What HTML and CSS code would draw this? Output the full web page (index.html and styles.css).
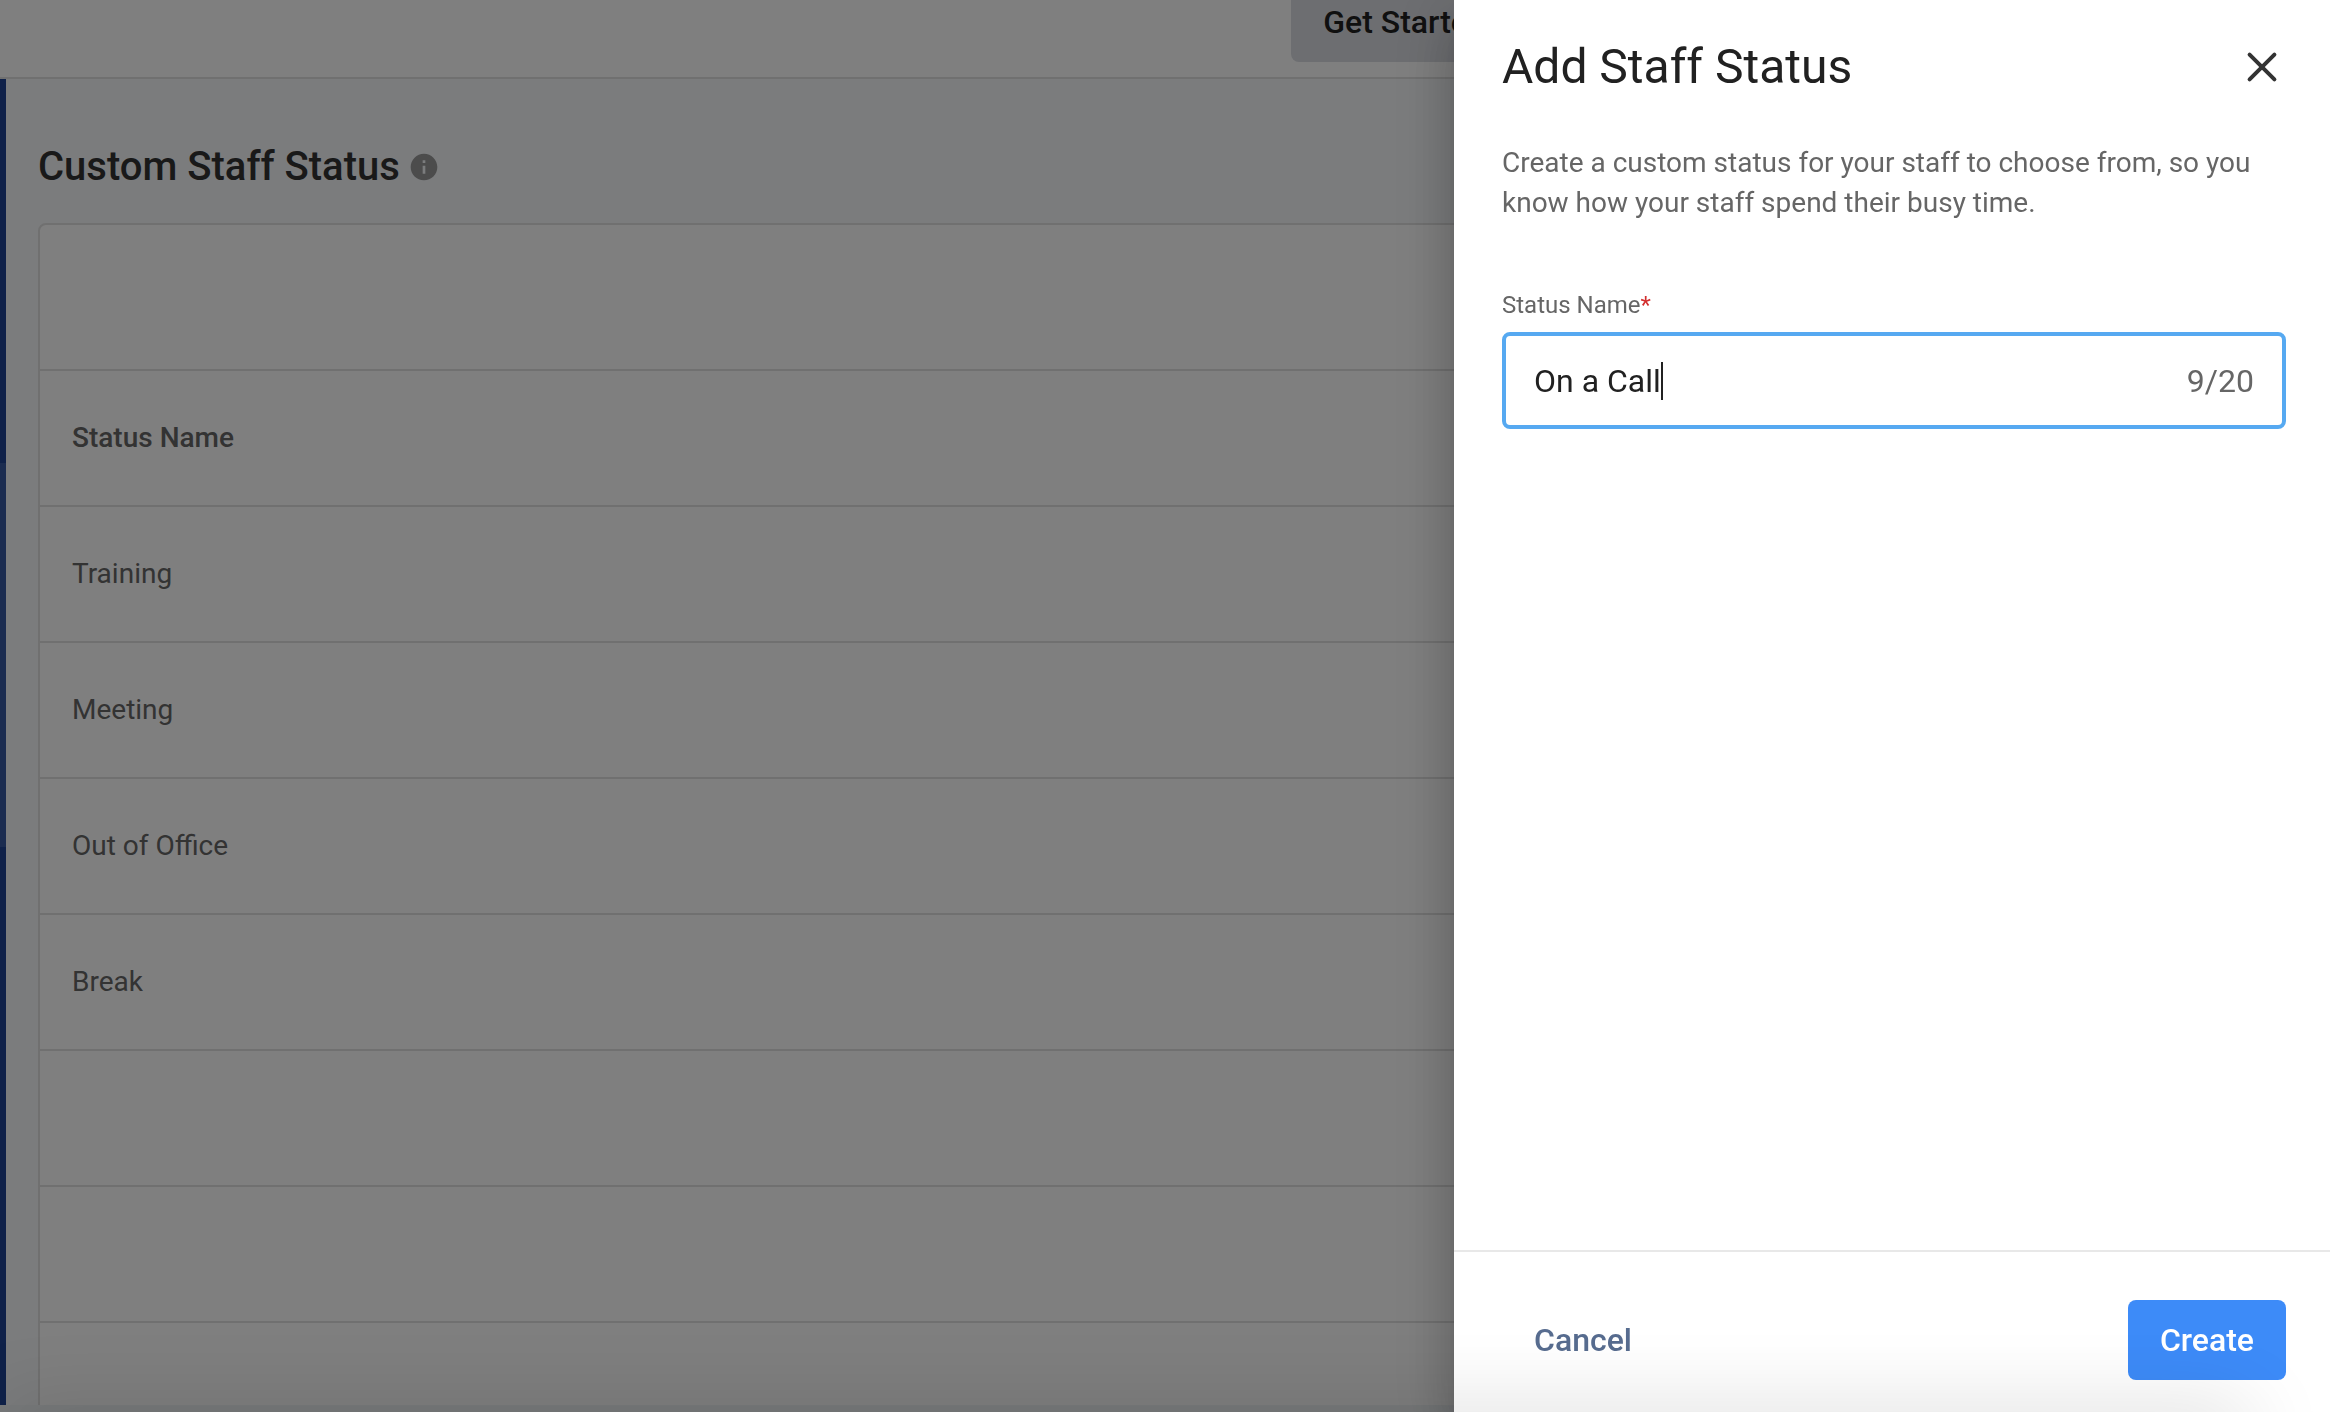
FILE: index.html
```
<!DOCTYPE html>
<html lang="en">
<head>
  <meta charset="UTF-8">
  <title>Custom Staff Status</title>
  <link rel="stylesheet" href="styles.css">
</head>
<body>
  <div class="app">
    <header class="topbar">
      <button type="button" class="btn btn-grey">Get Started</button>
    </header>
    <div class="layout">
      <nav class="sidebar">
        <div class="sidebar-active"></div>
      </nav>
      <main class="content">
        <div class="heading">
          <h1>Custom Staff Status</h1>
          <svg class="info-icon" viewBox="0 0 24 24">
            <path d="M12 2C6.48 2 2 6.48 2 12s4.48 10 10 10 10-4.48 10-10S17.52 2 12 2zm1 15h-2v-6h2v6zm0-8h-2V7h2v2z" fill="#999"/>
          </svg>
        </div>
        <section class="card">
          <div class="card-toolbar"></div>
          <table class="status-table">
            <thead>
              <tr><th>Status Name</th></tr>
            </thead>
            <tbody>
              <tr><td>Training</td></tr>
              <tr><td>Meeting</td></tr>
              <tr><td>Out of Office</td></tr>
              <tr><td>Break</td></tr>
              <tr><td></td></tr>
              <tr><td></td></tr>
              <tr><td></td></tr>
            </tbody>
          </table>
        </section>
      </main>
    </div>
  </div>

  <div class="backdrop"></div>

  <form class="drawer">
    <div class="drawer-header">
      <h2>Add Staff Status</h2>
      <button type="button" class="close-btn" aria-label="Close">
        <svg viewBox="0 0 24 24">
          <path d="M5.8 5.8l12.4 12.4M18.2 5.8L5.8 18.2" stroke="#333" stroke-width="2" stroke-linecap="round"/>
        </svg>
      </button>
    </div>
    <div class="drawer-body">
      <p class="description">Create a custom status for your staff to choose from, so you know how your staff spend their busy time.</p>
      <label class="field-label" for="status-name">Status Name<span class="required">*</span></label>
      <div class="field">
        <input type="text" id="status-name" value="On a Call" maxlength="20">
        <span class="caret"></span>
        <span class="counter">9/20</span>
      </div>
    </div>
    <div class="drawer-footer">
      <button type="button" class="btn btn-text">Cancel</button>
      <button type="submit" class="btn btn-primary">Create</button>
    </div>
  </form>

  <div class="bottom-shade"></div>
</body>
</html>
```

FILE: styles.css
```
* {
  box-sizing: border-box;
}
body {
  margin: 0;
  height: 100vh;
  overflow: hidden;
  background-color: #f0f4f7;
  font-family: Roboto, "Liberation Sans", sans-serif;
  color: #333;
}
h1, h2, p {
  margin: 0;
}
.app {
  display: flex;
  flex-direction: column;
  height: 100vh;
  padding-bottom: 7px;
}
.btn {
  height: 80px;
  padding: 0 32px;
  border: none;
  border-radius: 8px;
  font-family: inherit;
  font-size: 32px;
  font-weight: 500;
  cursor: pointer;
}

/* page */
.topbar {
  display: flex;
  flex-shrink: 0;
  align-items: flex-end;
  justify-content: flex-end;
  height: 79px;
  padding: 0 812px 15px 0;
  border-bottom: 2px solid #e0e0e0;
  background-color: #fff;
}
.btn-grey {
  flex-shrink: 0;
  background-color: #dbdde3;
  color: #212121;
}
.layout {
  display: flex;
  flex: 1;
  min-height: 0;
  background-color: #f6f8fb;
}
.sidebar {
  width: 6px;
  padding-top: 384px;
  background-color: #1e4292;
}
.sidebar-active {
  height: 384px;
  background-color: #3658a0;
}
.content {
  flex: 1;
  padding: 64px 32px 0;
  overflow: hidden;
}
.heading {
  display: flex;
  align-items: center;
  gap: 8px;
  margin-bottom: 32px;
}
.heading h1 {
  font-size: 40px;
  line-height: 48px;
  font-weight: 500;
}
.info-icon {
  width: 32px;
  height: 32px;
}
.card {
  border: 2px solid #e0e0e0;
  border-radius: 8px;
  background-color: #fff;
}
.card-toolbar {
  height: 146px;
  border-bottom: 2px solid #e0e0e0;
}
.status-table {
  width: 100%;
  border-spacing: 0;
  font-size: 28px;
  color: #666;
}
.status-table th,
.status-table td {
  height: 136px;
  padding: 0 32px 2px;
  border-bottom: 2px solid #e0e0e0;
  text-align: left;
}
.status-table th {
  font-weight: 500;
}
.backdrop {
  position: fixed;
  inset: 0;
  background-color: rgba(0, 0, 0, 0.5);
}

/* drawer */
.drawer {
  position: fixed;
  top: 0;
  right: 0;
  bottom: 0;
  display: flex;
  flex-direction: column;
  width: 876px;
  background-color: #fff;
  box-shadow: 0 16px 20px -10px rgba(0, 0, 0, 0.2),
    0 32px 48px 4px rgba(0, 0, 0, 0.14),
    0 12px 60px 10px rgba(0, 0, 0, 0.12);
}
.drawer-header {
  display: flex;
  align-items: center;
  justify-content: space-between;
  padding: 39px 44px 0 48px;
}
.drawer-header h2 {
  font-size: 48px;
  line-height: 56px;
  font-weight: 400;
  color: #212121;
}
.close-btn {
  width: 48px;
  height: 48px;
  padding: 0;
  border: none;
  background: none;
  cursor: pointer;
}
.close-btn svg {
  display: block;
}
.drawer-body {
  flex: 1;
  padding: 48px 44px 0 48px;
}
.description {
  margin-bottom: 66px;
  font-size: 28px;
  line-height: 40px;
  color: #666;
}
.field-label {
  display: block;
  margin-bottom: 11px;
  font-size: 24px;
  line-height: 32px;
  color: #666;
}
.required {
  color: #d32f2f;
}
.field {
  display: flex;
  align-items: center;
  height: 97px;
  padding: 0 28px;
  border: 4px solid #56a9f1;
  border-radius: 8px;
  font-size: 32px;
}
.field input {
  field-sizing: content;
  padding: 0;
  border: none;
  outline: none;
  font: inherit;
  color: #212121;
  caret-color: transparent;
}
.caret {
  width: 2px;
  height: 38px;
  background-color: #212121;
}
.counter {
  margin-left: auto;
  color: #666;
}
.drawer-footer {
  display: flex;
  justify-content: space-between;
  padding: 48px 44px 32px 48px;
  border-top: 2px solid #e8e8e8;
}
.btn-text {
  background: none;
  color: #576c8f;
}
.btn-primary {
  background-color: #3d8bf8;
  color: #fff;
}

/* soft shade along the lower edge of the window */
.bottom-shade {
  position: fixed;
  left: 0;
  right: 80px;
  bottom: -40px;
  height: 40px;
  box-shadow: 0 0 80px rgba(0, 0, 0, 0.18);
  pointer-events: none;
}
```
